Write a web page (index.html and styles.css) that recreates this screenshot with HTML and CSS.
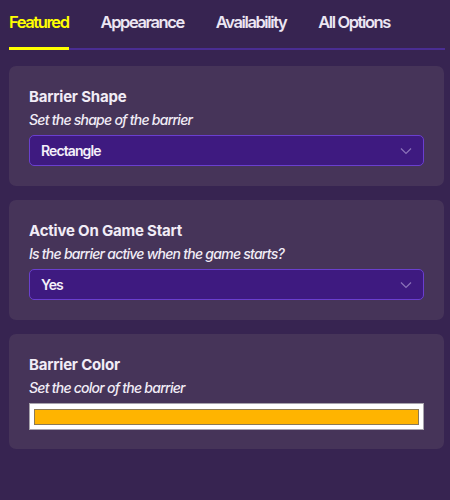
FILE: index.html
```html
<!DOCTYPE html>
<html>
<head>
<meta charset="utf-8">
<link rel="stylesheet" href="styles.css">
</head>
<body>
<nav class="tabs">
  <div class="tab active">Featured</div>
  <div class="tab">Appearance</div>
  <div class="tab">Availability</div>
  <div class="tab">All Options</div>
</nav>
<main class="cards">
  <section class="card">
    <div class="title">Barrier Shape</div>
    <div class="sub">Set the shape of the barrier</div>
    <div class="select">
      <span>Rectangle</span>
      <svg class="chev" width="12" height="8" viewBox="0 0 12 8"><path d="M1 1.5 L6 6.5 L11 1.5" fill="none" stroke="#8b73b8" stroke-width="1.2"/></svg>
    </div>
  </section>
  <section class="card">
    <div class="title">Active On Game Start</div>
    <div class="sub">Is the barrier active when the game starts?</div>
    <div class="select">
      <span>Yes</span>
      <svg class="chev" width="12" height="8" viewBox="0 0 12 8"><path d="M1 1.5 L6 6.5 L11 1.5" fill="none" stroke="#8b73b8" stroke-width="1.2"/></svg>
    </div>
  </section>
  <section class="card card-color">
    <div class="title">Barrier Color</div>
    <div class="sub">Set the color of the barrier</div>
    <div class="color-box"><div class="swatch"></div></div>
  </section>
</main>
</body>
</html>
```
FILE: styles.css
```css
html, body {
  margin: 0;
  padding: 0;
}
body {
  background: #372451;
  width: 450px;
  height: 500px;
  font-family: Inter, "Liberation Sans", sans-serif;
  color: #f1ecf6;
  overflow: hidden;
}
.tabs {
  display: flex;
  gap: 32px;
  margin: 0 5px 0 9px;
  height: 48px;
  border-bottom: 2px solid #4a2d93;
  align-items: stretch;
}
.tab {
  font-size: 16.5px;
  font-weight: 600;
  color: #ece6f3;
  padding-top: 12px;
  box-sizing: border-box;
  letter-spacing: -1.4px;
}
.tab.active {
  color: #ffff00;
  border-bottom: 3px solid #ffff00;
  margin-bottom: -2px;
}
.cards {
  display: flex;
  flex-direction: column;
  gap: 14px;
  margin: 16px 6px 0 9px;
}
.card {
  background: #463459;
  border-radius: 7px;
  padding: 22px 20px 20px 20px;
  display: flex;
  flex-direction: column;
}
.title {
  font-size: 15px;
  font-weight: 700;
  line-height: 18px;
  letter-spacing: -0.2px;
}
.sub {
  font-size: 14px;
  font-style: italic;
  font-weight: 500;
  line-height: 17px;
  margin-top: 5px;
  letter-spacing: -0.75px;
}
.select {
  margin-top: 7px;
  height: 31px;
  box-sizing: border-box;
  background: #3e1a80;
  border: 1px solid #6a3fcf;
  border-radius: 5px;
  display: flex;
  align-items: center;
  justify-content: space-between;
  padding: 0 11px;
  font-size: 14px;
  font-weight: 600;
  letter-spacing: -0.9px;
  color: #f4f0fa;
}
.card-color {
  padding-bottom: 19px;
}
.color-box {
  margin-top: 7px;
  height: 27px;
  box-sizing: border-box;
  background: #ffffff;
  border: 1px solid #a7a3ac;
  padding: 5px 4px 4px 4px;
}
.swatch {
  height: 100%;
  background: #ffb400;
  border: 1px solid #8c7a55;
  box-sizing: border-box;
}
```
